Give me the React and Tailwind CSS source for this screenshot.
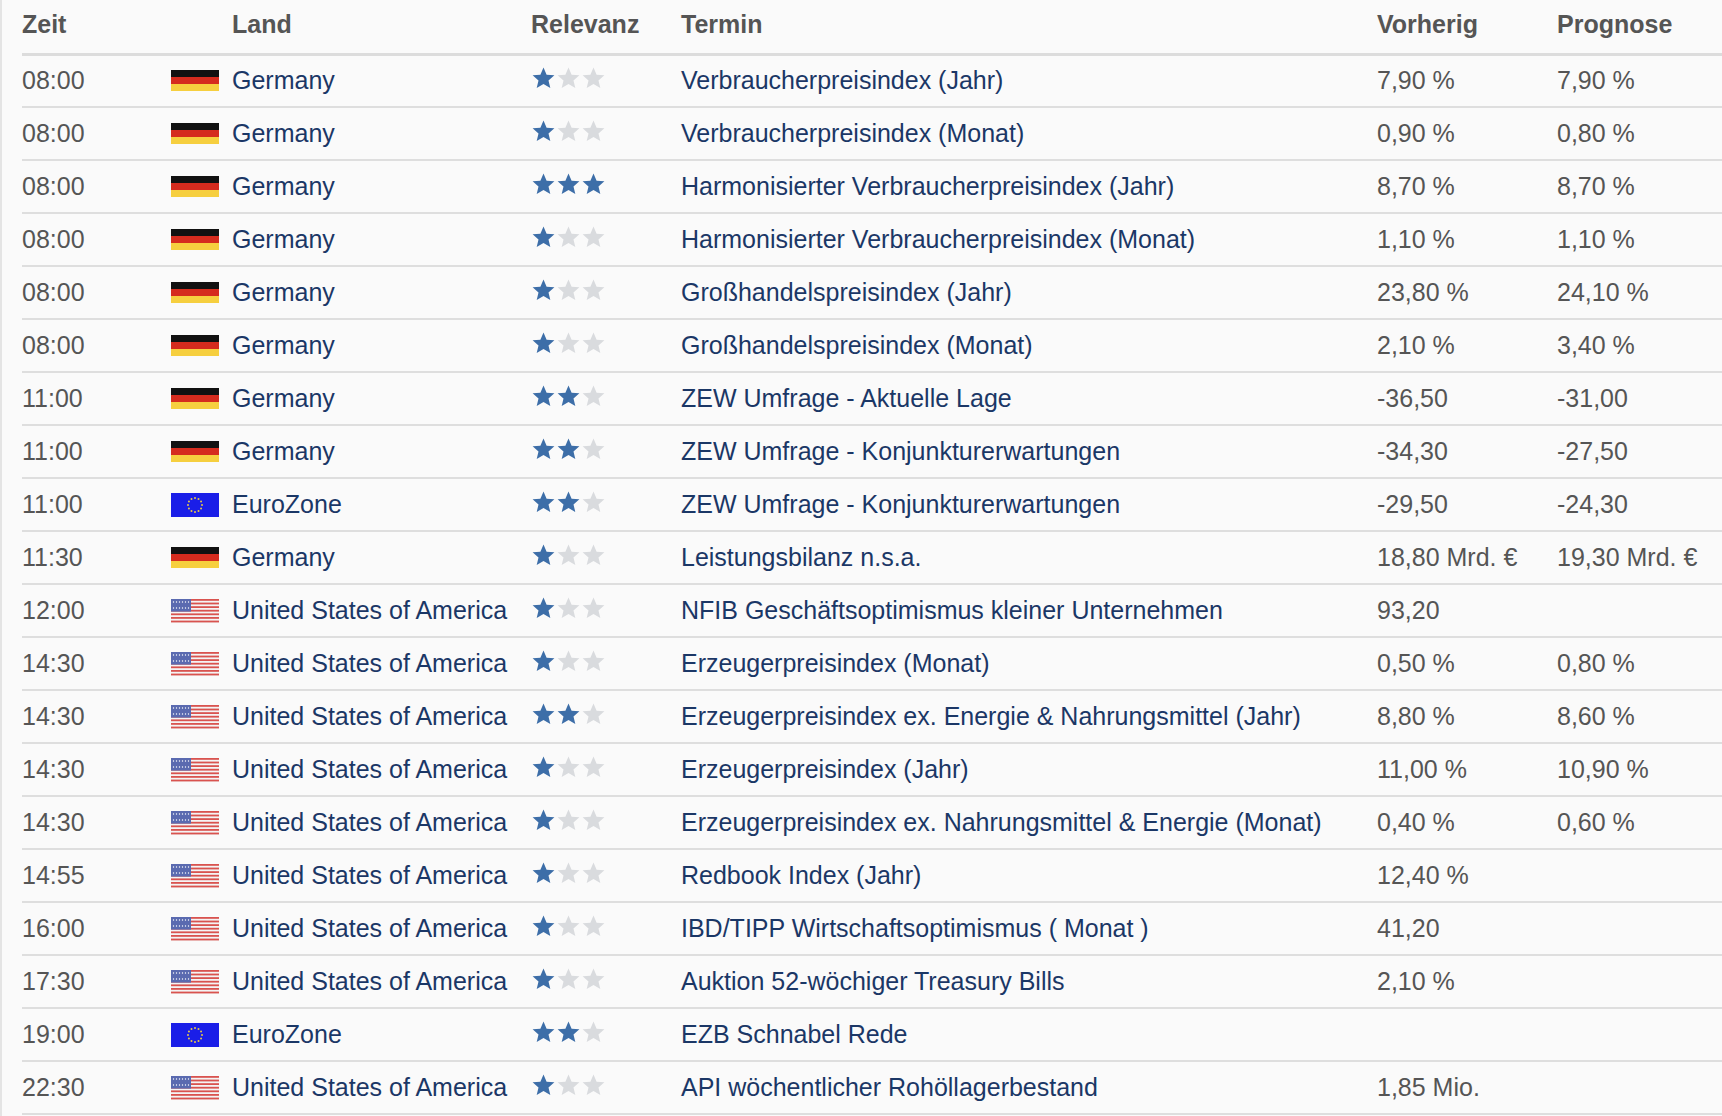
const rows = [
  ["08:00", "de", 1, "Verbraucherpreisindex (Jahr)", "7,90 %", "7,90 %"],
  ["08:00", "de", 1, "Verbraucherpreisindex (Monat)", "0,90 %", "0,80 %"],
  ["08:00", "de", 3, "Harmonisierter Verbraucherpreisindex (Jahr)", "8,70 %", "8,70 %"],
  ["08:00", "de", 1, "Harmonisierter Verbraucherpreisindex (Monat)", "1,10 %", "1,10 %"],
  ["08:00", "de", 1, "Großhandelspreisindex (Jahr)", "23,80 %", "24,10 %"],
  ["08:00", "de", 1, "Großhandelspreisindex (Monat)", "2,10 %", "3,40 %"],
  ["11:00", "de", 2, "ZEW Umfrage - Aktuelle Lage", "-36,50", "-31,00"],
  ["11:00", "de", 2, "ZEW Umfrage - Konjunkturerwartungen", "-34,30", "-27,50"],
  ["11:00", "eu", 2, "ZEW Umfrage - Konjunkturerwartungen", "-29,50", "-24,30"],
  ["11:30", "de", 1, "Leistungsbilanz n.s.a.", "18,80 Mrd. €", "19,30 Mrd. €"],
  ["12:00", "us", 1, "NFIB Geschäftsoptimismus kleiner Unternehmen", "93,20", ""],
  ["14:30", "us", 1, "Erzeugerpreisindex (Monat)", "0,50 %", "0,80 %"],
  ["14:30", "us", 2, "Erzeugerpreisindex ex. Energie & Nahrungsmittel (Jahr)", "8,80 %", "8,60 %"],
  ["14:30", "us", 1, "Erzeugerpreisindex (Jahr)", "11,00 %", "10,90 %"],
  ["14:30", "us", 1, "Erzeugerpreisindex ex. Nahrungsmittel & Energie (Monat)", "0,40 %", "0,60 %"],
  ["14:55", "us", 1, "Redbook Index (Jahr)", "12,40 %", ""],
  ["16:00", "us", 1, "IBD/TIPP Wirtschaftsoptimismus ( Monat )", "41,20", ""],
  ["17:30", "us", 1, "Auktion 52-wöchiger Treasury Bills", "2,10 %", ""],
  ["19:00", "eu", 2, "EZB Schnabel Rede", "", ""],
  ["22:30", "us", 1, "API wöchentlicher Rohöllagerbestand", "1,85 Mio.", ""],
];

const countries = { de: "Germany", eu: "EuroZone", us: "United States of America" };

const Flag = ({ code }) => {
  if (code === "de")
    return (
      <svg width="48" height="21" viewBox="0 0 48 21" className="shrink-0">
        <rect width="48" height="7" fill="#111" />
        <rect y="7" width="48" height="7" fill="#d52b1e" />
        <rect y="14" width="48" height="7" fill="#f6cf3f" />
      </svg>
    );
  if (code === "eu") {
    const stars = Array.from({ length: 12 }, (_, i) => {
      const a = (i / 12) * Math.PI * 2;
      return <circle key={i} cx={24 + Math.cos(a) * 7} cy={12 + Math.sin(a) * 7} r="1" fill="#e8c84a" />;
    });
    return (
      <svg width="48" height="24" viewBox="0 0 48 24" className="shrink-0">
        <rect width="48" height="24" fill="#1a1ee8" />
        {stars}
      </svg>
    );
  }
  return (
    <svg width="48" height="24" viewBox="0 0 48 24" className="shrink-0">
      <rect width="48" height="24" fill="#f4f4f4" />
      {Array.from({ length: 7 }, (_, i) => (
        <rect key={i} y={i * 3.6} width="48" height="1.8" fill="#d9534f" />
      ))}
      <rect width="20" height="12.6" fill="#5a6ab0" />
      {Array.from({ length: 12 }, (_, i) => (
        <circle key={i} cx={2.5 + (i % 6) * 3} cy={3 + Math.floor(i / 6) * 6} r="0.7" fill="#fff" />
      ))}
    </svg>
  );
};

const Star = ({ on }) => (
  <svg width="25" height="24" viewBox="0 0 24 24">
    <path
      d="M12 1.5l3.1 7.2 7.8.6-5.9 5.1 1.8 7.6L12 18l-6.8 4 1.8-7.6-5.9-5.1 7.8-.6z"
      fill={on ? "#3d6ea8" : "#d9dbde"}
    />
  </svg>
);

const App = () => (
  <div
    className="min-h-screen bg-[#fafafa] border-l-2 border-[#e4e4e4] pl-[20px] text-[25px]"
    style={{ fontFamily: "'Liberation Sans', Arial, sans-serif" }}
  >
    <table className="w-full border-collapse table-fixed">
      <colgroup>
        <col className="w-[149px]" />
        <col className="w-[360px]" />
        <col className="w-[150px]" />
        <col className="w-[696px]" />
        <col className="w-[180px]" />
        <col />
      </colgroup>
      <thead>
        <tr className="h-[54px] border-b-[3px] border-[#dcdcdc] text-[#555] font-bold text-left">
          <th className="font-bold pb-[3px]">Zeit</th>
          <th className="font-bold pl-[61px] pb-[3px]">Land</th>
          <th className="font-bold pb-[3px]">Relevanz</th>
          <th className="font-bold pb-[3px]">Termin</th>
          <th className="font-bold pb-[3px]">Vorherig</th>
          <th className="font-bold pb-[3px]">Prognose</th>
        </tr>
      </thead>
      <tbody>
        {rows.map(([time, code, rel, name, prev, prog], i) => (
          <tr key={i} className="h-[53px] border-b-2 border-[#dedede]">
            <td className="text-[#555]">{time}</td>
            <td>
              <div className="flex items-center gap-[13px] text-[#1b3766] whitespace-nowrap">
                <Flag code={code} />
                <span>{countries[code]}</span>
              </div>
            </td>
            <td>
              <div className="flex -mt-[6px]">
                {[1, 2, 3].map((n) => (
                  <Star key={n} on={n <= rel} />
                ))}
              </div>
            </td>
            <td className="text-[#1b3766] whitespace-nowrap">{name}</td>
            <td className="text-[#555] whitespace-nowrap">{prev}</td>
            <td className="text-[#555] whitespace-nowrap">{prog}</td>
          </tr>
        ))}
      </tbody>
    </table>
  </div>
);

export default App;
